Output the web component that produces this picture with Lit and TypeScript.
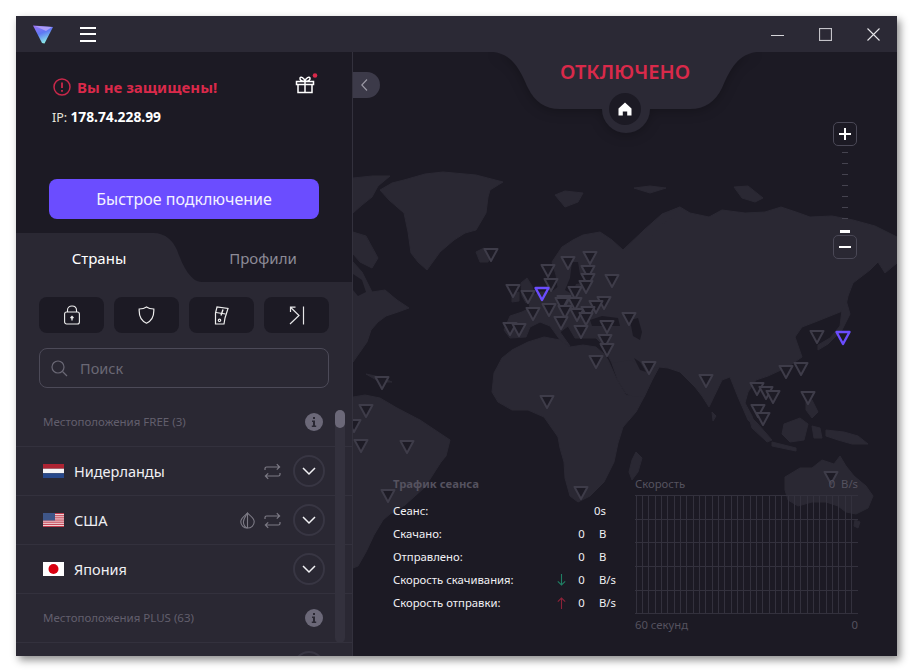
import { LitElement, html, css, svg } from "lit";
import { customElement } from "lit/decorators.js";

const LAND: string[] = [
  // Greenland
  "380,190 392,183 404,180 425,174 443,172 476,175 503,182 490,190 488,197 486,213 476,230 465,233 454,240 440,252 427,270 418,262 411,253 408,232 404,213 389,200",
  // Canadian arctic
  "353,178 372,176 390,176 378,186 372,197 362,205 353,213",
  "353,232 366,236 378,258 372,268 360,262 353,254",
  // North America
  "353,262 362,272 372,292 385,290 397,300 409,308 398,312 386,316 378,322 371,330 367,342 360,352 353,362",
  "366,374 380,377 392,382 380,382",
  // South America
  "353,397 365,395 380,398 397,408 420,420 450,440 446,456 441,462 425,487 405,505 390,514 383,520 374,535 366,552 358,566 353,568",
  // Iceland
  "476,252 484,248 492,254 488,262 480,262",
  // UK / Ireland
  "521,283 527,278 532,286 535,298 526,303 522,296",
  "512,294 519,292 519,301 512,302",
  // Eurasia
  "562,247 573,240 583,235 600,232 612,240 623,250 644,230 662,214 680,207 690,213 709,217 722,210 745,213 765,212 781,207 796,212 810,217 832,216 853,220 875,226 897,237 897,263 885,273 878,262 870,270 853,283 848,296 845,310 830,316 815,322 802,327 795,337 802,357 792,364 781,370 768,376 756,380 748,392 745,403 752,416 756,427 748,420 738,397 730,377 722,380 709,407 702,396 695,387 680,372 668,368 659,367 652,380 644,397 632,396 626,393 618,380 612,363 606,352 601,343 596,338 575,338 568,326 560,332 570,346 563,344 550,326 540,322 530,327 526,337 510,338 504,330 510,316 522,312 530,308 528,298 540,292 552,292 558,287 556,275 552,262",
  // Africa
  "494,373 502,358 512,350 528,342 544,337 560,340 570,347 583,345 596,347 604,354 608,360 617,380 626,395 644,397 636,412 623,427 618,443 614,462 604,482 590,496 578,502 570,496 565,478 564,462 560,448 558,437 544,417 528,410 512,410 498,402 492,392",
  // Madagascar
  "636,452 642,458 638,472 632,480 629,472 632,460",
  // Arabia
  "612,363 630,360 648,368 659,367 652,380 644,397 632,396 626,393 618,380",
  // Japan
  "846,300 850,314 842,330 828,344 818,350 818,345 830,338 840,326 842,310",
  // Sri Lanka, Indonesia etc
  "712,412 716,416 713,421",
  "748,414 758,424 772,440 767,442 752,428",
  "772,442 796,448 796,451 772,446",
  "784,424 800,418 808,424 804,440 790,442 782,434",
  "806,402 812,400 818,412 812,418 806,410",
  "812,426 820,428 822,438 814,438",
  "826,430 844,432 858,436 868,444 852,444 838,440 826,436",
  // Australia
  "785,477 800,468 812,468 822,460 834,464 840,456 846,466 854,476 866,486 873,496 868,508 856,514 846,512 838,506 826,502 812,502 798,506 788,500 785,490",
  // Tasmania
  "855,520 860,522 858,528 854,526",
  // Arctic isles
  "555,195 565,191 583,193 578,202 565,207",
  "634,188 650,186 666,188 650,193",
  "734,187 748,186 763,198 755,202 742,198",
  "646,230 664,214 680,207 674,216 660,226 652,236",
];

const SEA: string[] = [
  // Baltic
  "572,262 578,262 580,274 590,282 576,284 572,294 565,290 570,278",
  // Black Sea
  "590,320 602,316 618,318 620,326 604,326 592,326",
  // Caspian
  "630,320 638,318 642,332 640,340 633,336",
  // Hudson
  "353,274 362,280 366,292 358,296 353,290",
  // Persian gulf
  "634,358 640,362 646,372 640,370",
];

const PINS: [number, number][] = [
  [491, 255], [568, 263], [590, 258], [548, 271], [588, 272], [588, 280], [586, 287], [551, 285], [612, 281],
  [513, 291], [528, 297], [575, 293], [564, 302], [562, 304], [575, 304], [604, 303], [596, 307], [549, 310],
  [565, 312], [577, 315], [588, 313], [533, 314], [629, 319], [586, 319], [561, 323], [607, 327], [510, 329],
  [519, 330], [581, 332], [605, 341], [607, 350], [596, 362], [649, 368], [706, 381], [817, 337], [786, 372],
  [801, 369], [757, 389], [766, 393], [773, 397], [808, 398], [758, 411], [763, 419], [382, 383], [366, 411],
  [354, 426], [361, 446], [407, 447], [547, 402], [388, 496], [581, 493], [831, 478],
];
const ACTIVE_PINS: [number, number][] = [[542, 294], [843, 338]];

const pin = (p: [number, number], cls: string) =>
  svg`<polygon class=${cls} points="${p[0] - 6.5},${p[1] - 6} ${p[0] + 6.5},${p[1] - 6} ${p[0]},${p[1] + 6}"></polygon>`;

const chevronDown = html`<svg width="14" height="9" viewBox="0 0 14 9" fill="none" stroke="#f1f1f4" stroke-width="1.5"><path d="M1 1l6 6 6-6"/></svg>`;
const p2p = html`<svg class="side" width="17" height="17" viewBox="0 0 17 17" fill="none" stroke="#7c7a85" stroke-width="1.2"><path d="M1 7V5.500C1 4.500 1.700 4 2.600 4H15.500M12.800 1.200 15.600 4l-2.800 2.600M16 10v1.500c0 1-.7 1.500-1.600 1.500H1.500M4.200 10.400 1.400 13l2.800 2.800"/></svg>`;
const onion = html`<svg class="side" width="15" height="17" viewBox="0 0 15 17" fill="none" stroke="#7c7a85" stroke-width="1.100"><path d="M7.500 1C6.800 2.600 .8 5 .8 9.800.8 13.500 3.800 16 7.500 16s6.700-2.500 6.700-6.200C14.200 5 8.200 2.600 7.500 1Z"/><path d="M7.500 1C5.500 4.500 3.400 7 3.400 10s2 6 4.100 6"/><path d="M7.500 1v15"/></svg>`;

const FLAGS = {
  nl: html`<svg class="flag" width="21" height="14" viewBox="0 0 21 14"><rect width="21" height="4.700" fill="#ae2433"/><rect y="4.700" width="21" height="4.600" fill="#f4f4f6"/><rect y="9.300" width="21" height="4.700" fill="#27488b"/></svg>`,
  us: html`<svg class="flag" width="21" height="14" viewBox="0 0 21 14"><rect width="21" height="14" fill="#f3e3e4"/>${[0, 2.2, 4.3, 6.5, 8.6, 10.8, 12.9].map(
    (y) => svg`<rect y=${y} width="21" height="1.100" fill="#c0394c"/>`
  )}<rect width="12" height="7.500" fill="#3f5688"/></svg>`,
  jp: html`<svg class="flag" width="21" height="14" viewBox="0 0 21 14"><rect width="21" height="14" fill="#fff"/><circle cx="10.500" cy="7" r="5" fill="#d80010"/></svg>`,
};

const info = html`<svg width="18" height="18" viewBox="0 0 18 18"><circle cx="9" cy="9" r="9" fill="#6b6878"/><path d="M8 4h2v2H8zM7 7.500h3V12.500h1.200V14H6.800v-1.500H8V9H7z" fill="#2a2833"/></svg>`;

const ROWS = [
  { kind: "head", text: "Местоположения FREE (3)" },
  { kind: "row", flag: "nl", name: "Нидерланды", p2p: true, tor: false },
  { kind: "row", flag: "us", name: "США", p2p: true, tor: true },
  { kind: "row", flag: "jp", name: "Япония", p2p: false, tor: false },
  { kind: "head", text: "Местоположения PLUS (63)" },
  { kind: "row", flag: "", name: "", p2p: false, tor: false },
];

const STATS = [
  { label: "Сеанс:", arrow: "", value: "", unit: "0s" },
  { label: "Скачано:", arrow: "", value: "0", unit: "B" },
  { label: "Отправлено:", arrow: "", value: "0", unit: "B" },
  { label: "Скорость скачивания:", arrow: "down", value: "0", unit: "B/s" },
  { label: "Скорость отправки:", arrow: "up", value: "0", unit: "B/s" },
];

@customElement("app-root")
export class AppRoot extends LitElement {
  static styles = css`
    :host {
      display: block;
      height: 672px;
      padding: 16px;
      box-sizing: border-box;
      background: #fff;
      font-family: "Noto Sans", "Open Sans", sans-serif;
      color: #f1f1f4;
    }
    .window {
      width: 881px;
      height: 640px;
      display: flex;
      flex-direction: column;
      background: #1c1a24;
      box-shadow: 3px 4px 8px rgba(0, 0, 0, 0.45);
      overflow: hidden;
    }
    .titlebar {
      height: 36px;
      flex: none;
      background: #2b2935;
      display: flex;
      align-items: center;
      padding-left: 16px;
    }
    .burger {
      margin-left: 26px;
      width: 16px;
      display: flex;
      flex-direction: column;
      gap: 4.5px;
    }
    .burger i {
      display: block;
      height: 2px;
      background: #fff;
    }
    .winctl {
      margin-left: auto;
      display: flex;
      align-items: center;
      gap: 35px;
      padding-right: 17px;
    }
    .main {
      flex: 1;
      display: flex;
      min-height: 0;
    }
    .sidebar {
      width: 336px;
      flex: none;
      display: flex;
      flex-direction: column;
      border-right: 1px solid #33313d;
      background: #2a2833;
      min-height: 0;
    }
    .head {
      height: 181px;
      flex: none;
      box-sizing: border-box;
      background: #1c1a24;
      padding: 25px 33px 14px;
      display: flex;
      flex-direction: column;
    }
    .status {
      display: flex;
      align-items: center;
      padding-left: 4px;
      height: 20px;
      gap: 6px;
    }
    .status b {
      color: #d9294a;
      font-size: 15px;
      font-weight: 700;
    }
    .gift {
      margin-left: auto;
      margin-right: 1px;
      margin-top: -7px;
    }
    .ip {
      margin-top: 11px;
      padding-left: 3px;
      font-size: 12.5px;
      line-height: 18px;
      color: #e8e4dc;
    }
    .ip b {
      color: #fff;
      font-size: 13.8px;
      font-weight: 700;
    }
    .connect {
      margin-top: auto;
      height: 40px;
      border-radius: 8px;
      background: #6b4dff;
      display: flex;
      align-items: center;
      justify-content: center;
      color: #f3f1ff;
      font-size: 16px;
    }
    .tabs {
      position: relative;
      height: 49px;
      flex: none;
      background: #1c1a24;
      display: flex;
      font-size: 15px;
    }
    .tabs svg {
      position: absolute;
      inset: 0;
    }
    .tab {
      position: relative;
      display: flex;
      align-items: center;
      justify-content: center;
    }
    .tab.a {
      width: 166px;
      color: #fff;
    }
    .tab.b {
      flex: 1;
      padding-right: 8px;
      color: #8d8b97;
    }
    .filters {
      flex: none;
      display: flex;
      gap: 10px;
      padding: 15px 23px 0;
    }
    .filters div {
      flex: 1;
      height: 36px;
      border-radius: 8px;
      background: #1c1a24;
      display: flex;
      align-items: center;
      justify-content: center;
    }
    .search {
      flex: none;
      box-sizing: border-box;
      margin: 15px 23px 0;
      height: 40px;
      border: 1px solid #4c4a58;
      border-radius: 8px;
      display: flex;
      align-items: center;
      padding-left: 11px;
      gap: 12px;
      font-size: 14.5px;
      color: #6a6875;
    }
    .list {
      position: relative;
      margin-top: 10px;
      flex: 1;
      overflow: hidden;
    }
    .item {
      height: 49px;
      box-sizing: border-box;
      border-bottom: 1px solid #33313d;
      display: flex;
      align-items: center;
      padding: 0 27px 0 27px;
    }
    .group {
      font-size: 11.5px;
      color: #625f6d;
      padding-right: 29px;
    }
    .group span {
      margin-top: -2px;
    }
    .group svg {
      margin-left: auto;
    }
    .name {
      margin-left: 10px;
      font-size: 14.5px;
      color: #f0f0f4;
    }
    .side {
      margin-left: 9px;
    }
    .icons {
      margin-left: auto;
      display: flex;
      align-items: center;
    }
    .expand {
      width: 32px;
      height: 32px;
      box-sizing: border-box;
      border: 2px solid #383643;
      border-radius: 50%;
      margin-left: 12px;
      display: flex;
      align-items: center;
      justify-content: center;
    }
    .track {
      position: absolute;
      left: 319px;
      top: 12px;
      width: 10px;
      height: 233px;
      border-radius: 5px;
      background: #33313d;
    }
    .thumb {
      height: 18px;
      border-radius: 5px;
      background: #6b6878;
    }
    .map {
      position: relative;
      flex: 1;
      overflow: hidden;
    }
    .map > svg.world {
      position: absolute;
      left: 0;
      top: 0;
    }
    .land {
      fill: #2a2833;
      stroke: #2a2833;
      stroke-width: 1;
      stroke-linejoin: round;
    }
    .sea {
      fill: #1c1a24;
    }
    .pin {
      fill: #1d1b25;
      stroke: #3e3c49;
      stroke-width: 2;
      stroke-linejoin: round;
    }
    .pin.on {
      fill: none;
      stroke: #6b4dff;
      stroke-width: 2.4;
    }
    .notch {
      position: absolute;
      left: 130px;
      top: 0;
      filter: drop-shadow(0 2px 6px rgba(0, 0, 0, 0.25));
    }
    .title {
      position: absolute;
      left: 0;
      width: 544px;
      top: 7px;
      text-align: center;
      color: #d9294a;
      font-size: 20px;
      line-height: 26px;
      font-weight: 600;
    }
    .collapse {
      position: absolute;
      left: 0;
      top: 20px;
      width: 23px;
      padding-right: 4px;
      height: 26px;
      border-radius: 0 13px 13px 0;
      background: #3c3a49;
      display: flex;
      align-items: center;
      justify-content: center;
    }
    .zoom {
      position: absolute;
      left: 480px;
      top: 70px;
      width: 24px;
      display: flex;
      flex-direction: column;
      align-items: center;
    }
    .zbtn {
      width: 24px;
      height: 24px;
      box-sizing: border-box;
      border: 1px solid #4a4856;
      border-radius: 5px;
      display: flex;
      align-items: center;
      justify-content: center;
    }
    .ticks {
      height: 89px;
      display: flex;
      flex-direction: column;
      align-items: center;
      padding-top: 6px;
      box-sizing: border-box;
      gap: 10px;
    }
    .ticks i {
      display: block;
      width: 6px;
      height: 1px;
      background: #45434f;
    }
    .ticks i.cur {
      width: 10px;
      height: 3px;
      margin-top: 1px;
      background: #fff;
    }
    .stats {
      position: absolute;
      left: 40px;
      top: 423px;
      width: 465px;
      display: flex;
      font-size: 11.3px;
    }
    .traffic {
      width: 242px;
      flex: none;
    }
    .traffic h3 {
      margin: 0;
      height: 18px;
      font-size: 11.3px;
      line-height: 18px;
      font-weight: 700;
      color: #55525f;
    }
    .grid {
      margin-top: 6px;
      display: grid;
      grid-template-columns: 156px 24px 17px 45px;
      grid-auto-rows: 23px;
      align-items: center;
    }
    .grid .c {
      display: flex;
      justify-content: center;
      text-align: center;
    }
    .grid .u {
      padding-left: 9px;
    }
    .grid .u.t {
      padding-left: 4px;
    }
    .speed {
      flex: 1;
      color: #55525f;
    }
    .speed header,
    .speed footer {
      display: flex;
      justify-content: space-between;
      height: 18px;
      line-height: 18px;
    }
    .speed header {
      margin-bottom: 2px;
    }
    .speed footer {
      margin-top: 2px;
    }
    .speed svg {
      display: block;
    }
    .speed pre {
      margin: 0;
      font: inherit;
    }
  `;

  render() {
    const vlines = Array.from({ length: 36 }, (_, i) => 0.5 + (i * 222) / 35);
    const hlines = [0.5, 24.5, 47.5, 71.5, 95.5, 118.5];
    return html`
      <div class="window">
        <div class="titlebar">
          <svg width="22" height="20" viewBox="0 0 22 20">
            <defs>
              <linearGradient id="lg" x1="0.15" y1="0" x2="0.6" y2="1">
                <stop offset="0" stop-color="#9a72f5" />
                <stop offset="0.45" stop-color="#5f78f5" />
                <stop offset="1" stop-color="#8ff5e8" />
              </linearGradient>
            </defs>
            <path d="M1 1.500 21 3 12.500 19.500 10 19Z" fill="url(#lg)" />
            <path d="M3 2 20 3 14 7 Z" fill="#b5a4f8" opacity="0.85" />
          </svg>
          <div class="burger"><i></i><i></i><i></i></div>
          <div class="winctl">
            <svg width="13" height="13" viewBox="0 0 13 13" stroke="#d6d5da" stroke-width="1"><path d="M0 7.500h13" /></svg>
            <svg width="13" height="13" viewBox="0 0 14 14" fill="none" stroke="#c4c3c9" stroke-width="1.200"><rect x=".6" y=".6" width="12.800" height="12.800" /></svg>
            <svg width="13" height="13" viewBox="0 0 13 13" fill="none" stroke="#e6e6ea" stroke-width="1.100"><path d="M.5.5l12 12M12.500.5l-12 12" /></svg>
          </div>
        </div>
        <div class="main">
          <aside class="sidebar">
            <div class="head">
              <div class="status">
                <svg width="18" height="18" viewBox="0 0 18 18" fill="none" stroke="#c9284a" stroke-width="1.500"><circle cx="9" cy="9" r="8" /><path d="M9 4.500v5.500M9 12v1.800" stroke-width="1.800" /></svg>
                <b>Вы не защищены!</b>
                <svg class="gift" width="23" height="21" viewBox="0 0 23 21" fill="none" stroke="#fff" stroke-width="1.500">
                  <path d="M1.500 8.500h17v3h-17zM3 11.500h14V19.500H3zM10 8.500V19.500M10 8.500C6.500 8.500 4.500 6.800 5 5S9.300 4.500 10 8.500c.7-4 4.500-5.300 5-3.500s-1.500 3.500-5 3.500Z" />
                  <circle cx="20" cy="2.500" r="2.300" fill="#d9294a" stroke="none" />
                </svg>
              </div>
              <div class="ip">IP: <b>178.74.228.99</b></div>
              <div class="connect">Быстрое подключение</div>
            </div>
            <div class="tabs">
              <svg width="336" height="49" viewBox="0 0 336 49"><path d="M0 0H137C150 0 157 8 161 17 165 28 168 34 172 40 176 45 180 49 186 49H0Z" fill="#2a2833" /></svg>
              <div class="tab a">Страны</div>
              <div class="tab b">Профили</div>
            </div>
            <div class="filters">
              <div>
                <svg width="18" height="20" viewBox="0 0 18 20" fill="none" stroke="#eee" stroke-width="1.100"><rect x="1.600" y="7" width="14.800" height="12" rx="2" /><path d="M4.500 7V5.200C4.500 2.800 6.400 1 9 1s4.500 1.800 4.500 4.200V7" /><path d="M9 15.500v-3.500M7.500 13l1.500-1.500 1.500 1.500" stroke-width="1.300" /></svg>
              </div>
              <div>
                <svg width="17" height="18" viewBox="0 0 17 18" fill="none" stroke="#eee" stroke-width="1.200"><path d="M8.500 1C6.500 2.500 4 3 1.200 3c-.4 7 1.200 11.500 7.300 14.200C14.600 14.500 16.200 10 15.800 3 13 3 10.500 2.500 8.500 1Z" /></svg>
              </div>
              <div>
                <svg width="15" height="19" viewBox="0 0 15 19" fill="none" stroke="#eee" stroke-width="1.200"><path d="M1.500 7V18H10L11 12 14 2.500 3 1 1.500 7Z" /><path d="M2 6.500 11.500 8" /><circle cx="5.500" cy="14.300" r="1.200" /><path d="M7 9.500 9 3.500" stroke-width="1.400" /></svg>
              </div>
              <div>
                <svg width="16" height="19" viewBox="0 0 16 19" fill="none" stroke="#e6e6e8" stroke-width="1.200"><path d="M1 18 10 9.500 1.500 1.200M1.500 6V1.200H6.500" /><path d="M14.500 .5v18" /></svg>
              </div>
            </div>
            <div class="search">
              <svg width="17" height="17" viewBox="0 0 17 17" fill="none" stroke="#6a6875" stroke-width="1.200"><circle cx="7" cy="7" r="6" /><path d="M11.500 11.500 16 16" /></svg>
              <span>Поиск</span>
            </div>
            <div class="list">
              ${ROWS.map((r) =>
                r.kind === "head"
                  ? html`<div class="item group"><span>${r.text}</span>${info}</div>`
                  : html`<div class="item">
                      ${r.flag ? FLAGS[r.flag as keyof typeof FLAGS] : ""}
                      <span class="name">${r.name}</span>
                      <div class="icons">
                        ${r.tor ? onion : ""} ${r.p2p ? p2p : ""}
                        <div class="expand">${chevronDown}</div>
                      </div>
                    </div>`
              )}
              <div class="track"><div class="thumb"></div></div>
            </div>
          </aside>
          <div class="map">
            <svg class="world" width="544" height="604" viewBox="353 52 544 604">
              ${LAND.map((p) => svg`<polygon class="land" points=${p}></polygon>`)}
              ${SEA.map((p) => svg`<polygon class="sea" points=${p}></polygon>`)}
              ${PINS.map((p) => pin(p, "pin"))} ${ACTIVE_PINS.map((p) => pin(p, "pin on"))}
            </svg>
            <svg class="notch" width="284" height="84" viewBox="0 0 284 84">
              <path d="M11 0C32 3 39 23 45 36 52 50 62 57 77 57H119A24 24 0 0 0 167 57H207C222 57 232 50 239 36 245 23 252 3 273 0Z" fill="#2b2935" />
              <circle cx="142" cy="57" r="16" fill="#1c1a24" />
              <path d="M142 50.500 135.500 56.500V63.500H139.800V59.500H144.200V63.500H148.500V56.500Z" fill="#fff" />
            </svg>
            <div class="title">ОТКЛЮЧЕНО</div>
            <div class="collapse">
              <svg width="7" height="12" viewBox="0 0 7 12" fill="none" stroke="#9c9aa6" stroke-width="1.100"><path d="M6 .5.800 6 6 11.500" /></svg>
            </div>
            <div class="zoom">
              <div class="zbtn"><svg width="14" height="14" viewBox="0 0 14 14" stroke="#fff" stroke-width="2"><path d="M7 1v12M1 7h12" /></svg></div>
              <div class="ticks"><i></i><i></i><i></i><i></i><i></i><i></i><i></i><i class="cur"></i></div>
              <div class="zbtn"><svg width="12" height="4" viewBox="0 0 12 4" stroke="#fff" stroke-width="2"><path d="M0 2h12" /></svg></div>
            </div>
            <div class="stats">
              <div class="traffic">
                <h3>Трафик сеанса</h3>
                <div class="grid">
                  ${STATS.map(
                    (s) => html`
                      <span>${s.label}</span>
                      <span class="c">
                        ${s.arrow === "down"
                          ? html`<svg width="9" height="12" viewBox="0 0 9 12" fill="none" stroke="#1f7f63" stroke-width="1.100"><path d="M4.500 0v11M.8 7.300l3.700 3.700 3.700-3.700" /></svg>`
                          : s.arrow === "up"
                          ? html`<svg width="9" height="12" viewBox="0 0 9 12" fill="none" stroke="#8b2338" stroke-width="1.100"><path d="M4.500 12V1M.8 4.700 4.500 1l3.700 3.700" /></svg>`
                          : ""}
                      </span>
                      <span class="c">${s.value}</span>
                      <span class="u ${s.value ? "" : "t"}">${s.unit}</span>
                    `
                  )}
                </div>
              </div>
              <div class="speed">
                <header><span>Скорость</span><pre>0  B/s</pre></header>
                <svg width="223" height="119" viewBox="0 0 223 119" stroke="#33313d" stroke-width="1">
                  ${vlines.map((x) => svg`<path d="M${Math.round(x) + 0.5} 0v119"></path>`)}
                  ${hlines.map((y) => svg`<path d="M0 ${y}h223"></path>`)}
                </svg>
                <footer><span>60 секунд</span><span>0</span></footer>
              </div>
            </div>
          </div>
        </div>
      </div>
    `;
  }
}
